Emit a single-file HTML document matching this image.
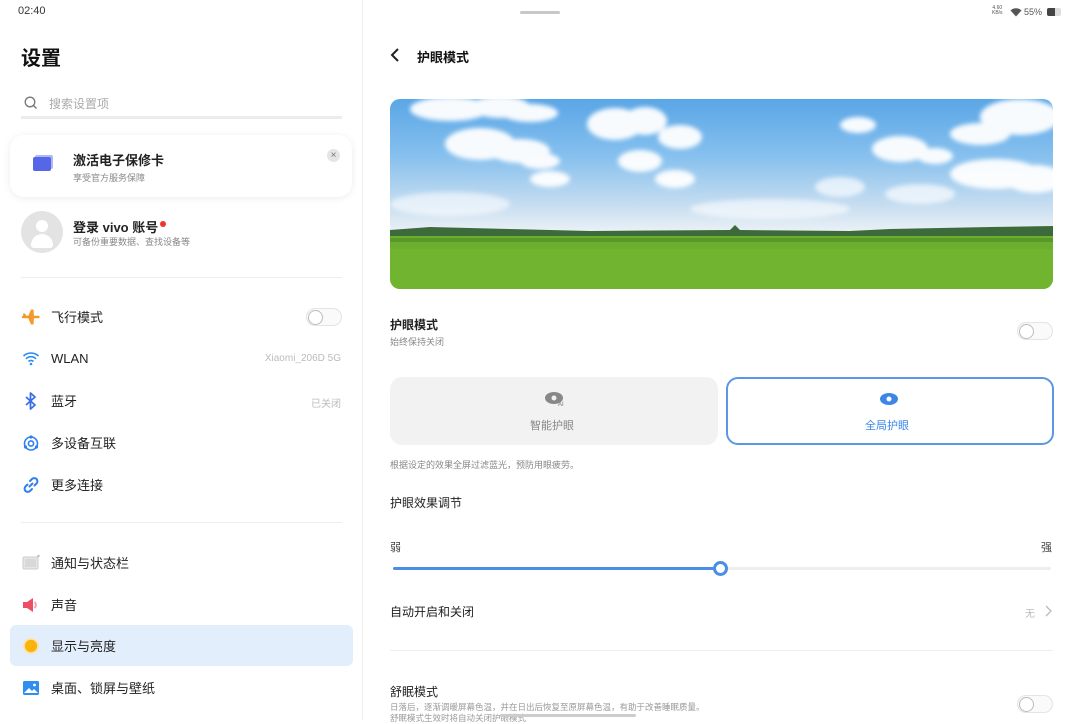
<!DOCTYPE html>
<html><head><meta charset="utf-8"><style>
*{margin:0;padding:0;box-sizing:border-box}
body{width:1080px;height:720px;overflow:hidden;background:#fff;font-family:"Liberation Sans","Noto Sans CJK SC",sans-serif;color:#222;position:relative}
.a{position:absolute}
.left{left:0;top:0;width:363px;height:720px;border-right:1px solid #eee}
.it{position:absolute;left:22px;font-size:13px;color:#222;display:flex;align-items:center}
.it .t{margin-left:11px}
.sw{position:absolute;width:36px;height:18px;border:1.5px solid #e4e4e4;border-radius:9px;background:#fafafa}
.sw:before{content:"";position:absolute;left:1px;top:1px;width:13px;height:13px;border:1.5px solid #bbb;border-radius:50%;background:#fff}
.gray{color:#bbb;font-size:11px}
</style></head><body>
<div class="a left">
  <div class="a" style="left:18px;top:5px;font-size:11px;color:#333">02:40</div>
  <div class="a" style="left:21px;top:42px;font-size:20px;font-weight:bold;color:#111">设置</div>
  <svg class="a" style="left:24px;top:96px" width="14" height="14" viewBox="0 0 14 14"><circle cx="6" cy="6" r="4.8" fill="none" stroke="#777" stroke-width="1.3"/><path d="M9.5 9.5L12.5 12.5" stroke="#777" stroke-width="1.3"/></svg>
  <div class="a" style="left:49px;top:95px;font-size:12px;color:#aaa">搜索设置项</div>
  <div class="a" style="left:21px;top:116px;width:321px;height:3px;background:#ececec"></div>
  <div class="a" style="left:10px;top:135px;width:342px;height:62px;border-radius:14px;background:#fff;box-shadow:0 1px 8px rgba(0,0,0,0.08)"></div>
  <div class="a" style="left:33px;top:157px;width:18px;height:14px;border-radius:2px;background:#5567e6;box-shadow:2px -2px 0 #aeb8f4"></div>
  <div class="a" style="left:73px;top:150px;font-size:13px;font-weight:bold;color:#222">激活电子保修卡</div>
  <div class="a" style="left:73px;top:171px;font-size:9px;color:#888">享受官方服务保障</div>
  <div class="a" style="left:327px;top:149px;width:13px;height:13px;border-radius:50%;background:#e5e5e5;font-size:10px;line-height:13px;text-align:center;color:#777">×</div>
  <div class="a" style="left:21px;top:211px;width:42px;height:42px;border-radius:50%;background:#e3e3e3;overflow:hidden">
    <div class="a" style="left:15px;top:9px;width:12px;height:12px;border-radius:50%;background:#fff"></div>
    <div class="a" style="left:10px;top:23px;width:22px;height:14px;border-radius:11px 11px 3px 3px;background:#fff"></div>
  </div>
  <div class="a" style="left:73px;top:217px;font-size:13px;font-weight:bold;color:#222">登录 vivo 账号</div>
  <div class="a" style="left:160px;top:221px;width:6px;height:6px;border-radius:50%;background:#e33"></div>
  <div class="a" style="left:73px;top:235px;font-size:9px;color:#888">可备份重要数据、查找设备等</div>
  <div class="a" style="left:21px;top:277px;width:321px;height:1px;background:#eee"></div>

  <div class="it" style="top:307px"><svg width="18" height="18" viewBox="0 0 18 18"><path d="M1 9h15.5" stroke="#f39a2b" stroke-width="2.4" stroke-linecap="round"/><path d="M6 8.5L9 1.5h2.5L12 8.5zM6 9.5L9 16.5h2.5L12 9.5zM1.5 9L1 5.5h1.8L5 8.5z" fill="#f39a2b"/></svg><span class="t">飞行模式</span></div>
  <div class="sw" style="left:306px;top:308px"></div>
  <div class="it" style="top:349px"><svg width="18" height="18" viewBox="0 0 18 18"><path d="M1.5 7a11 11 0 0 1 15 0M4 9.8a7 7 0 0 1 10 0M6.5 12.5a3.5 3.5 0 0 1 5 0" stroke="#2f8ef0" stroke-width="1.7" fill="none"/><circle cx="9" cy="15" r="1.3" fill="#2f8ef0"/></svg><span class="t">WLAN</span></div>
  <div class="a gray" style="right:21px;top:353px;font-size:10px">Xiaomi_206D 5G</div>
  <div class="it" style="top:391px"><svg width="18" height="18" viewBox="0 0 18 18"><path d="M4 5l9 8-4.5 4V1L13 5 4 13" stroke="#3d6ee8" stroke-width="1.8" fill="none" stroke-linejoin="round"/></svg><span class="t">蓝牙</span></div>
  <div class="a gray" style="right:21px;top:395px;font-size:10px">已关闭</div>
  <div class="it" style="top:433px"><svg width="18" height="18" viewBox="0 0 18 18"><circle cx="9" cy="9.5" r="6.5" stroke="#2f7ff0" stroke-width="1.6" fill="none"/><circle cx="9" cy="9.5" r="2.6" stroke="#2f7ff0" stroke-width="1.6" fill="none"/><circle cx="9" cy="3" r="1.6" fill="#2f7ff0"/><circle cx="3.5" cy="13" r="1.6" fill="#2f7ff0"/><circle cx="14.5" cy="13" r="1.6" fill="#2f7ff0"/></svg><span class="t">多设备互联</span></div>
  <div class="it" style="top:475px"><svg width="18" height="18" viewBox="0 0 18 18"><path d="M7.5 10.5l3-3M8 5l2-2a3 3 0 0 1 4.5 4.5l-2 2M10 13l-2 2a3 3 0 0 1-4.5-4.5l2-2" stroke="#2f7ff0" stroke-width="2" fill="none" stroke-linecap="round"/></svg><span class="t">更多连接</span></div>
  <div class="a" style="left:21px;top:522px;width:321px;height:1px;background:#eee"></div>
  <div class="it" style="top:553px"><svg width="18" height="18" viewBox="0 0 18 18"><rect x="1" y="3" width="15" height="12" rx="1.5" fill="#e6e6e6" stroke="#ccc"/><rect x="3" y="5" width="11" height="8" fill="#d8d8d8"/><circle cx="16.5" cy="2" r="1.2" fill="#bbb"/></svg><span class="t">通知与状态栏</span></div>
  <div class="it" style="top:595px"><svg width="18" height="18" viewBox="0 0 18 18"><path d="M1 6h4l6-4v14l-6-4H1z" fill="#ec4e66"/><path d="M12.5 6a4 4 0 0 1 0 6" stroke="#f7a5b2" stroke-width="2" fill="none"/></svg><span class="t">声音</span></div>
  <div class="a" style="left:10px;top:625px;width:343px;height:41px;border-radius:6px;background:#e3eefc"></div>
  <div class="it" style="top:636px"><svg width="18" height="18" viewBox="0 0 18 18"><circle cx="9" cy="9" r="8" fill="#fbe4b0"/><circle cx="9" cy="9" r="6.2" fill="#fbb40c"/></svg><span class="t">显示与亮度</span></div>
  <div class="it" style="top:678px"><svg width="18" height="18" viewBox="0 0 18 18"><rect x="1" y="2" width="16" height="14" rx="1.5" fill="#2f8ef0"/><path d="M2 14l5-5 3 3 2-2 4 4z" fill="#fff"/><circle cx="12.5" cy="6" r="1.4" fill="#fff"/></svg><span class="t">桌面、锁屏与壁纸</span></div>
</div>

<div class="a" style="left:520px;top:11px;width:40px;height:3px;border-radius:2px;background:#c8c8c8"></div>
<div class="a" style="left:992px;top:6px;font-size:5px;line-height:5px;color:#555;text-align:center">4.60<br>KB/s</div>
<svg class="a" style="left:1010px;top:7px" width="12" height="10" viewBox="0 0 12 10"><path d="M0.5 3.5a8 8 0 0 1 11 0L6 9.5z" fill="#555"/></svg>
<div class="a" style="left:1024px;top:7px;font-size:9px;color:#555">55%</div>
<div class="a" style="left:1047px;top:8px;width:14px;height:8px;border-radius:2px;background:#ddd"><div style="width:8px;height:8px;background:#444;border-radius:2px 0 0 2px"></div></div>

<svg class="a" style="left:389px;top:47px" width="12" height="16" viewBox="0 0 12 16"><path d="M9 2L3 8l6 6" stroke="#222" stroke-width="2" fill="none"/></svg>
<div class="a" style="left:417px;top:47px;font-size:13px;font-weight:bold;color:#111">护眼模式</div>

<div class="a" style="left:390px;top:99px;width:663px;height:190px;border-radius:10px;overflow:hidden;background:linear-gradient(180deg,#5aa6e6 0%,#86c0ee 30%,#c4dcf0 55%,#e6eef5 68%,#eef2f5 70%)">
  <svg width="663" height="190" style="position:absolute;left:0;top:0">
    <defs><filter id="b"><feGaussianBlur stdDeviation="2.5"/></filter></defs>
    <g fill="#fff" filter="url(#b)" opacity="0.95">
      <ellipse cx="60" cy="10" rx="40" ry="12"/><ellipse cx="110" cy="8" rx="30" ry="11"/><ellipse cx="140" cy="14" rx="28" ry="9"/>
      <ellipse cx="90" cy="45" rx="35" ry="16"/><ellipse cx="130" cy="52" rx="30" ry="12"/><ellipse cx="150" cy="62" rx="20" ry="8"/>
      <ellipse cx="225" cy="25" rx="28" ry="16"/><ellipse cx="255" cy="22" rx="22" ry="14"/><ellipse cx="290" cy="38" rx="22" ry="12"/>
      <ellipse cx="250" cy="62" rx="22" ry="11"/><ellipse cx="285" cy="80" rx="20" ry="9"/><ellipse cx="160" cy="80" rx="20" ry="8"/>
      <ellipse cx="468" cy="26" rx="18" ry="8"/><ellipse cx="510" cy="50" rx="28" ry="13"/><ellipse cx="545" cy="57" rx="18" ry="8"/>
      <ellipse cx="630" cy="18" rx="40" ry="18"/><ellipse cx="590" cy="35" rx="30" ry="11"/>
      <ellipse cx="605" cy="75" rx="45" ry="15"/><ellipse cx="645" cy="80" rx="30" ry="14"/>
      <ellipse cx="450" cy="88" rx="25" ry="10" opacity="0.7"/><ellipse cx="530" cy="95" rx="35" ry="10" opacity="0.7"/>
      <ellipse cx="60" cy="105" rx="60" ry="12" opacity="0.6"/><ellipse cx="380" cy="110" rx="80" ry="10" opacity="0.6"/>
    </g>
    <path d="M0 131 L40 128 L120 130 L200 132 L340 131 L345 126 L350 131 L460 132 L500 130 L600 128 L663 127 L663 140 L0 140Z" fill="#3d6a3a"/>
    <rect x="0" y="137" width="663" height="53" fill="#6cae2e"/>
    <rect x="0" y="139" width="663" height="4" fill="#4f8e28" opacity="0.7"/>
    <rect x="0" y="150" width="663" height="40" fill="#74b632" opacity="0.7"/>
  </svg>
</div>

<div class="a" style="left:390px;top:316px;font-size:12px;font-weight:bold;color:#222">护眼模式</div>
<div class="a" style="left:390px;top:335px;font-size:9px;color:#888">始终保持关闭</div>
<div class="sw" style="left:1017px;top:322px"></div>

<div class="a" style="left:390px;top:377px;width:328px;height:68px;border-radius:12px;background:#f2f2f2"></div>
<svg class="a" style="left:544px;top:391px" width="22" height="16" viewBox="0 0 22 16"><ellipse cx="10" cy="7" rx="9" ry="6" fill="#888"/><circle cx="10" cy="7" r="2.5" fill="#f2f2f2"/><text x="14" y="15" font-size="6" fill="#777" font-family="Liberation Sans">AI</text></svg>
<div class="a" style="left:530px;top:417px;font-size:11px;color:#888">智能护眼</div>
<div class="a" style="left:726px;top:377px;width:328px;height:68px;border-radius:12px;border:2px solid #5b97e6;background:#fff"></div>
<svg class="a" style="left:879px;top:392px" width="20" height="14" viewBox="0 0 20 14"><ellipse cx="10" cy="7" rx="9" ry="6" fill="#3d86e8"/><circle cx="10" cy="7" r="2.5" fill="#fff"/></svg>
<div class="a" style="left:865px;top:417px;font-size:11px;color:#3d86e8">全局护眼</div>
<div class="a" style="left:390px;top:458px;font-size:9px;color:#888">根据设定的效果全屏过滤蓝光，预防用眼疲劳。</div>

<div class="a" style="left:390px;top:494px;font-size:12px;color:#222">护眼效果调节</div>
<div class="a" style="left:390px;top:539px;font-size:11px;color:#444">弱</div>
<div class="a" style="left:1041px;top:539px;font-size:11px;color:#444">强</div>
<div class="a" style="left:393px;top:567px;width:658px;height:3px;border-radius:2px;background:#eee"></div>
<div class="a" style="left:393px;top:567px;width:327px;height:3px;border-radius:2px;background:#4a8ee6"></div>
<div class="a" style="left:713px;top:561px;width:15px;height:15px;border-radius:50%;border:3px solid #4a8ee6;background:#fff"></div>

<div class="a" style="left:390px;top:603px;font-size:12px;color:#222">自动开启和关闭</div>
<div class="a" style="left:1025px;top:605px;font-size:10px;color:#bbb">无</div>
<svg class="a" style="left:1044px;top:605px" width="8" height="12" viewBox="0 0 8 12"><path d="M2 1l5 5-5 5" stroke="#bbb" stroke-width="1.3" fill="none"/></svg>
<div class="a" style="left:390px;top:650px;width:663px;height:1px;background:#eee"></div>

<div class="a" style="left:390px;top:683px;font-size:12px;color:#222">舒眠模式</div>
<div class="a" style="left:390px;top:701px;font-size:8.5px;color:#999">日落后，逐渐调暖屏幕色温，并在日出后恢复至原屏幕色温，有助于改善睡眠质量。</div>
<div class="a" style="left:390px;top:712px;font-size:8.5px;color:#999">舒眠模式生效时将自动关闭护眼模式</div>
<div class="a" style="left:500px;top:714px;width:136px;height:3px;border-radius:2px;background:#ccc"></div>
<div class="sw" style="left:1017px;top:695px"></div>
</body></html>
